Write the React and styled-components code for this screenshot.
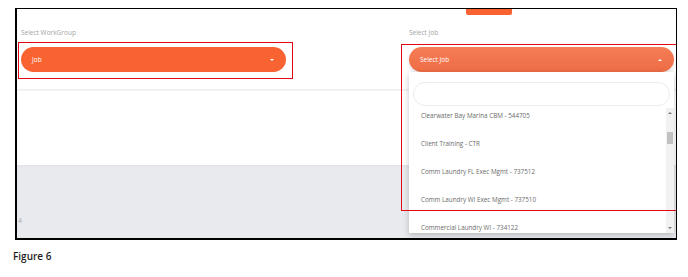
import styled, { createGlobalStyle } from "styled-components";

const GlobalStyle = createGlobalStyle`
  html, body {
    margin: 0;
    padding: 0;
    background: #fff;
  }
  body {
    font-family: "Open Sans", "Liberation Sans", sans-serif;
  }
`;

const jobs = [
  "Clearwater Bay Marina CBM - 544705",
  "Client Training - CTR",
  "Comm Laundry FL Exec Mgmt - 737512",
  "Comm Laundry WI Exec Mgmt - 737510",
  "Commercial Laundry WI - 734122",
];

const Page = styled.div`
  width: 688px;
  height: 277px;
  padding: 8px 0 0 15px;
  box-sizing: border-box;
`;

const Frame = styled.div`
  position: relative;
  width: 662px;
  height: 232px;
  box-sizing: border-box;
  border: solid #000;
  border-width: 1px 1px 2px 2px;
  display: flex;
  flex-direction: column;
  overflow: hidden;
`;

const TopBar = styled.div`
  height: 6px;
  display: flex;
`;

const Tab = styled.div`
  margin-left: 449px;
  width: 46px;
  height: 6px;
  background: #f96332;
  border-radius: 0 0 2px 2px;
`;

const FieldRow = styled.div`
  display: flex;
  justify-content: space-between;
  padding: 13px 2px 0 4px;
`;

const Field = styled.div`
  width: 265px;
  display: flex;
  flex-direction: column;
  gap: 9px;
`;

const Label = styled.div`
  font-size: 6.5px;
  line-height: 10px;
  color: #a3a3a3;
`;

const SelectWrap = styled.div`
  position: relative;
  z-index: 3;
`;

const Pill = styled.div`
  height: 25px;
  border-radius: 13px;
  display: flex;
  align-items: center;
  justify-content: space-between;
  padding: 0 12px 0 11px;
  box-sizing: border-box;
  color: #fff;
  font-size: 6.5px;
  background: ${(p) =>
    p.$open ? "linear-gradient(#f57d55, #ee6c46)" : "#f96332"};
  box-shadow: ${(p) => (p.$open ? "0 2px 4px rgba(0,0,0,0.12)" : "none")};
`;

const Caret = styled.span`
  width: 0;
  height: 0;
  border-left: 2px solid transparent;
  border-right: 2px solid transparent;
  ${(p) =>
    p.$up ? "border-bottom: 2.5px solid #fff;" : "border-top: 2.5px solid #fff;"}
`;

const Dropdown = styled.div`
  position: absolute;
  top: 100%;
  left: 0;
  right: 0;
  height: 161px;
  background: #fff;
  box-shadow: 0 2px 6px rgba(0, 0, 0, 0.22);
  display: flex;
  flex-direction: column;
  overflow: hidden;
`;

const Search = styled.div`
  margin: 10px 4px 2px;
  height: 24px;
  border: 1px solid #ececec;
  border-radius: 12px;
  box-sizing: border-box;
  flex-shrink: 0;
`;

const ListArea = styled.div`
  flex: 1;
  display: flex;
  min-height: 0;
`;

const List = styled.ul`
  flex: 1;
  margin: 0;
  padding: 0;
  list-style: none;
  overflow: hidden;
`;

const Item = styled.li`
  height: 28px;
  padding: 3px 0 0 12px;
  box-sizing: border-box;
  font-size: 6.3px;
  line-height: 10px;
  color: #6b6b6b;
  white-space: nowrap;
`;

const Scrollbar = styled.div`
  width: 8px;
  background: #f1f1f1;
  display: flex;
  flex-direction: column;
  align-items: center;
`;

const ScrollArrow = styled.div`
  height: 10px;
  display: flex;
  align-items: center;
  justify-content: center;
  &::after {
    content: "";
    border-left: 2px solid transparent;
    border-right: 2px solid transparent;
    ${(p) =>
      p.$down
        ? "border-top: 2.5px solid #777;"
        : "border-bottom: 2.5px solid #777;"}
  }
`;

const Thumb = styled.div`
  width: 6px;
  height: 12px;
  margin-top: 14px;
  background: #c1c1c1;
`;

const Track = styled.div`
  flex: 1;
`;

const Divider = styled.div`
  margin-top: 17px;
  height: 2px;
  background: linear-gradient(#ececec, #f7f7f7);
`;

const Blank = styled.div`
  height: 74px;
`;

const Grey = styled.div`
  flex: 1;
  background: linear-gradient(#e2e3e7 0px, #e9eaee 3px, #e9eaee);
  display: flex;
  align-items: flex-end;
  padding: 0 0 12px 1px;
`;

const Note = styled.span`
  font-size: 7px;
  color: #a9a9ad;
  line-height: 10px;
`;

const Annotation = styled.div`
  position: absolute;
  z-index: 5;
  left: ${(p) => p.$left}px;
  top: ${(p) => p.$top}px;
  width: ${(p) => p.$width}px;
  height: ${(p) => p.$height}px;
  border: 1px solid #e30613;
  box-sizing: border-box;
  pointer-events: none;
`;

const Caption = styled.div`
  margin: 10px 0 0 -2px;
  font-family: "Open Sans", "Liberation Sans", sans-serif;
  font-weight: 600;
  font-size: 10px;
  line-height: 12px;
  color: #1e1e1e;
`;

export default function App() {
  return (
    <>
      <GlobalStyle />
      <Page>
        <Frame>
          <TopBar>
            <Tab />
          </TopBar>
          <FieldRow>
            <Field>
              <Label>Select WorkGroup</Label>
              <SelectWrap>
                <Pill>
                  <span>Job</span>
                  <Caret />
                </Pill>
              </SelectWrap>
            </Field>
            <Field>
              <Label>Select Job</Label>
              <SelectWrap>
                <Pill $open>
                  <span>Select Job</span>
                  <Caret $up />
                </Pill>
                <Dropdown>
                  <Search />
                  <ListArea>
                    <List>
                      {jobs.map((job) => (
                        <Item key={job}>{job}</Item>
                      ))}
                    </List>
                    <Scrollbar>
                      <ScrollArrow />
                      <Thumb />
                      <Track />
                      <ScrollArrow $down />
                    </Scrollbar>
                  </ListArea>
                </Dropdown>
              </SelectWrap>
            </Field>
          </FieldRow>
          <Divider />
          <Blank />
          <Grey>
            <Note>4</Note>
          </Grey>
          <Annotation $left={1} $top={33} $width={275} $height={37} />
          <Annotation $left={384} $top={35} $width={276} $height={167} />
        </Frame>
        <Caption>Figure 6</Caption>
      </Page>
    </>
  );
}
